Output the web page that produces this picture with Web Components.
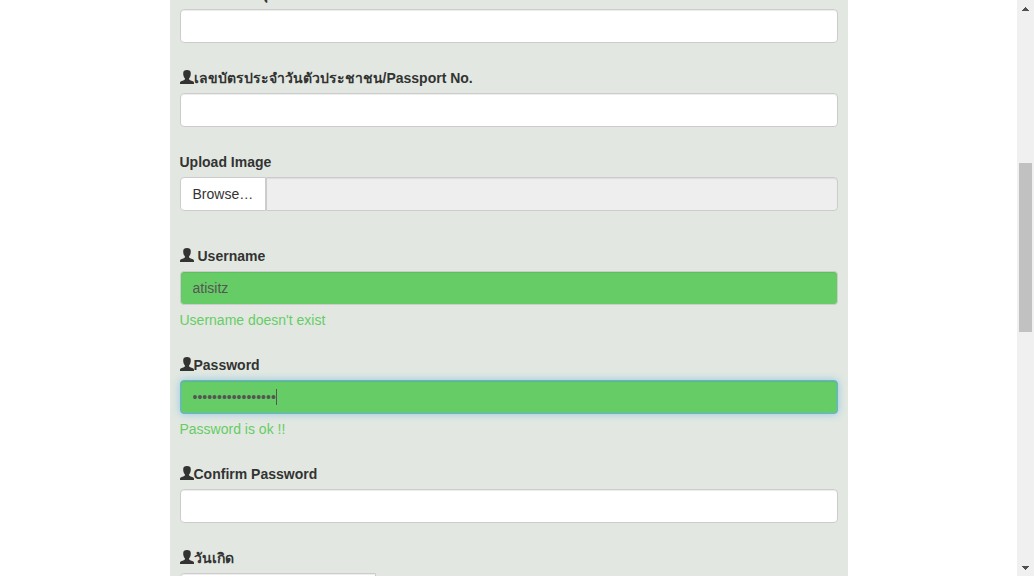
<!DOCTYPE html>
<html lang="th">
<head>
<meta charset="utf-8">
<title>Registration</title>
<style>
  html, body { height: 100%; }
  body {
    margin: 0;
    overflow: hidden;
    background: #fff;
    color: #333;
    font: 14px/20px "Liberation Sans", Arial, sans-serif;
  }
</style>
</head>
<body>
<page-frame>
  <register-panel>
    <form-field icon label="ชื่อ - นามสกุล"></form-field>
    <form-field icon label="เลขบัตรประจำวันตัวประชาชน/Passport No."></form-field>
    <file-field label="Upload Image"></file-field>
    <form-field icon spaced label="Username" value="atisitz" state="ok" help="Username doesn't exist"></form-field>
    <form-field icon label="Password" type="password" value="abcdefghijklmnopq" state="ok" active help="Password is ok !!"></form-field>
    <form-field icon label="Confirm Password" type="password"></form-field>
    <form-field icon short label="วันเกิด"></form-field>
  </register-panel>
</page-frame>

<script>
customElements.define('page-frame', class extends HTMLElement {
  constructor() {
    super();
    this.attachShadow({ mode: 'open' }).innerHTML = `
      <style>
        :host { display: flex; height: 100vh; overflow: hidden; }
        main { flex: 1; min-width: 0; overflow: hidden; }
      </style>
      <main><slot></slot></main>
      <scroll-rail></scroll-rail>`;
  }
});

customElements.define('scroll-rail', class extends HTMLElement {
  constructor() {
    super();
    this.attachShadow({ mode: 'open' }).innerHTML = `
      <style>
        :host { display: flex; flex-direction: column; width: 17px; background: #f0f0f0; }
        button { height: 17px; padding: 0; border: 0; background: none; display: grid; place-items: center; }
        svg { display: block; }
        .track { flex: 1; display: flex; flex-direction: column; padding: 0 2px; }
        .before { flex: 146; }
        .thumb { flex: 169; background: #c1c1c1; }
        .after { flex: 227; }
      </style>
      <button aria-label="Scroll up"><svg width="7" height="4" shape-rendering="crispEdges"><path fill="#505050" d="M3 0h1v1h1v1h1v1h1v1H0V3h1V2h1V1h1z"/></svg></button>
      <div class="track"><div class="before"></div><div class="thumb"></div><div class="after"></div></div>
      <button aria-label="Scroll down"><svg width="7" height="4" shape-rendering="crispEdges"><path fill="#505050" d="M0 0h7v1H6v1H5v1H4v1H3V3H2V2H1V1H0z"/></svg></button>`;
  }
});

customElements.define('register-panel', class extends HTMLElement {
  constructor() {
    super();
    this.attachShadow({ mode: 'open' }).innerHTML = `
      <style>
        /* The form is scrolled: its first label is mostly above the window. */
        :host { display: block; width: 66.6667%; margin: -16px auto 0; background: #e2e8e1; }
        form { display: flex; flex-direction: column; gap: 25px; padding: 0 10px; }
      </style>
      <form><slot></slot></form>`;
  }
});

customElements.define('user-icon', class extends HTMLElement {
  constructor() {
    super();
    this.attachShadow({ mode: 'open' }).innerHTML = `
      <style>
        :host { display: block; width: 14px; height: 14px; margin-bottom: 2px; }
        svg { display: block; }
      </style>
      <svg width="14" height="14" viewBox="0 0 14 14" aria-hidden="true">
        <path fill="#333" d="M7 0C4.500 0 3.200 1.200 3.200 3.200C3.200 5.600 3.800 7.200 4.900 8.300V9.200C4.900 9.700 4.500 9.900 3.800 10.200L1.200 11.200C.3 11.600 0 12.200 0 13.100V14H14V13.100C14 12.200 13.700 11.600 12.800 11.200L10.200 10.200C9.500 9.900 9.100 9.700 9.100 9.200V8.300C10.200 7.200 10.800 5.600 10.800 3.200C10.800 1.200 9.500 0 7 0Z"/>
      </svg>`;
  }
});

customElements.define('form-field', class extends HTMLElement {
  connectedCallback() {
    const type = this.getAttribute('type') || 'text';
    const root = this.attachShadow({ mode: 'open' });
    root.innerHTML = `
      <style>
        :host { display: block; }
        label { display: flex; align-items: center; height: 20px; margin-bottom: 5px; font-weight: 700; white-space: nowrap; }
        :host([spaced]) label { gap: 4px; }
        .box { position: relative; }
        input {
          display: block; box-sizing: border-box; width: 100%; height: 34px; padding: 6px 12px;
          border: 1px solid #ccc; border-radius: 4px; background: #fff; color: #555;
          font: inherit; outline: 0; box-shadow: inset 0 1px 1px rgba(0,0,0,.075);
        }
        :host([short]) input { width: 196px; border-radius: 4px 0 0 4px; }
        :host([state=ok]) input { background: #6c6; }
        :host([active]) input { border-color: #66afe9; box-shadow: inset 0 1px 1px rgba(0,0,0,.075), 0 0 8px rgba(102,175,233,.6); }
        .caret { position: absolute; left: 96px; top: 9px; width: 1px; height: 16px; background: #555; }
        p { margin: 5px 0 0; color: #6c6; }
      </style>
      <label for="control"><span></span></label>
      <div class="box"><input id="control" type="${type}"></div>`;
    root.querySelector('span').textContent = this.getAttribute('label');
    root.querySelector('input').value = this.getAttribute('value') || '';
    if (this.hasAttribute('icon')) root.querySelector('label').prepend(document.createElement('user-icon'));
    if (this.hasAttribute('active')) {
      const caret = document.createElement('i');
      caret.className = 'caret';
      root.querySelector('.box').append(caret);
    }
    if (this.hasAttribute('help')) {
      const help = document.createElement('p');
      help.textContent = this.getAttribute('help');
      root.append(help);
    }
  }
});

customElements.define('file-field', class extends HTMLElement {
  connectedCallback() {
    const root = this.attachShadow({ mode: 'open' });
    root.innerHTML = `
      <style>
        :host { display: block; margin-bottom: 10px; }
        label { display: block; height: 20px; margin-bottom: 5px; font-weight: 700; }
        .group { display: flex; height: 34px; }
        button, input { box-sizing: border-box; border: 1px solid #ccc; margin: 0; font: inherit; padding: 6px 12px; }
        button { background: #fff; color: #333; border-radius: 4px 0 0 4px; }
        input { flex: 1; min-width: 0; border-radius: 0 4px 4px 0; background: #eee; color: #555; box-shadow: inset 0 1px 1px rgba(0,0,0,.075); }
      </style>
      <label for="file-name"></label>
      <div class="group"><button type="button">Browse…</button><input id="file-name" type="text" readonly></div>`;
    root.querySelector('label').textContent = this.getAttribute('label');
  }
});
</script>
</body>
</html>
